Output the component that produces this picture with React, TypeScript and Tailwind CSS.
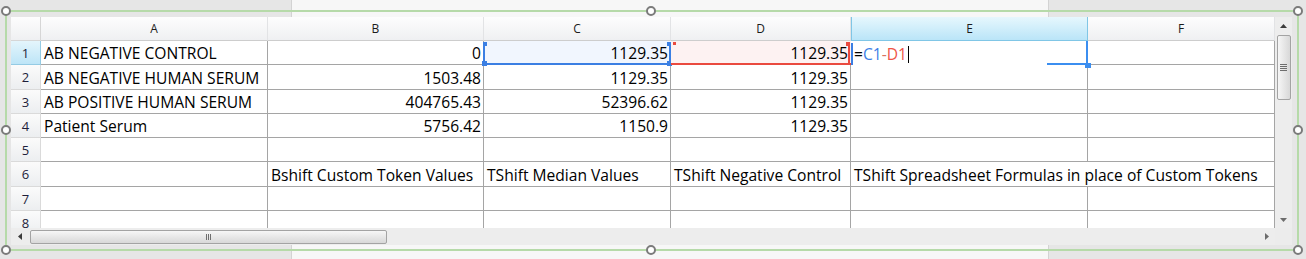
import React from 'react';

type Col = { key: string; w: string };

const cols: Col[] = [
  { key: 'A', w: 'w-[227px]' },
  { key: 'B', w: 'w-[216px]' },
  { key: 'C', w: 'w-[187px]' },
  { key: 'D', w: 'w-[180px]' },
  { key: 'E', w: 'w-[237px]' },
  { key: 'F', w: 'w-[187px]' },
];

const rows: { n: number; h: string; cells: string[] }[] = [
  { n: 2, h: 'h-[25px]', cells: ['AB NEGATIVE HUMAN SERUM', '1503.48', '1129.35', '1129.35', '', ''] },
  { n: 3, h: 'h-[24px]', cells: ['AB POSITIVE HUMAN SERUM', '404765.43', '52396.62', '1129.35', '', ''] },
  { n: 4, h: 'h-[24px]', cells: ['Patient Serum', '5756.42', '1150.9', '1129.35', '', ''] },
  { n: 5, h: 'h-[24px]', cells: ['', '', '', '', '', ''] },
  {
    n: 6,
    h: 'h-[25px]',
    cells: [
      '',
      'Bshift Custom Token Values',
      'TShift Median Values',
      'TShift Negative Control',
      'TShift Spreadsheet Formulas in place of Custom Tokens',
      '',
    ],
  },
  { n: 7, h: 'h-[24px]', cells: ['', '', '', '', '', ''] },
  { n: 8, h: 'h-[24px]', cells: ['', '', '', '', '', ''] },
];

const isNumber = (s: string) => /^[\d.]+$/.test(s);

function RowHeader({ n, active }: { n: number; active?: boolean }) {
  return (
    <div
      className={`flex w-[30px] shrink-0 items-center justify-center border-r border-b pt-[2px] text-[13px] text-[#1e1e3a] ${
        active
          ? 'border-[#94cbe4] bg-linear-to-b from-[#e4f5fc] to-[#bde5f7]'
          : 'border-[#dadada] bg-linear-to-b from-[#fbfbfb] to-[#eceef0]'
      }`}
    >
      {n}
    </div>
  );
}

function Cell({ w, text, wide }: { w: string; text: string; wide?: boolean }) {
  const right = isNumber(text);
  return (
    <div
      className={`flex shrink-0 items-center border-b border-[#a5a5a5] bg-white pt-[3px] ${w} ${
        right ? 'justify-end pr-[2px]' : 'pl-[3px]'
      } ${wide ? 'relative z-10 bg-transparent' : 'border-r'}`}
    >
      {text && <span className="whitespace-nowrap">{text}</span>}
    </div>
  );
}

// vertical selection edge with small square grips at both ends
function Edge({ pos, color }: { pos: string; color: string }) {
  return (
    <>
      <div className={`absolute top-[2px] bottom-0 w-[2px] ${pos} ${color}`} />
      <div className={`absolute top-[1px] h-[4px] w-[4px] ${pos} ${color}`} />
    </>
  );
}

function FirstRow() {
  return (
    <div className="flex h-[24px]">
      <RowHeader n={1} active />
      <Cell w="w-[227px]" text="AB NEGATIVE CONTROL" />
      <Cell w="w-[216px]" text="0" />

      <div className="relative flex w-[187px] shrink-0 items-center justify-end border-b-2 border-[#3b7fe3] bg-[#f1f6fe] pt-[3px] pr-[3px]">
        <span>1129.35</span>
        <Edge pos="-left-[1px]" color="bg-[#3b7fe3]" />
        <div className="absolute -bottom-[3px] -left-[2px] h-[5px] w-[5px] bg-[#3b7fe3]" />
        <Edge pos="right-0" color="bg-[#3b7fe3]" />
        <div className="absolute -right-[1px] -bottom-[3px] h-[5px] w-[5px] bg-[#3b7fe3]" />
      </div>

      <div className="relative flex w-[180px] shrink-0 items-center justify-end border-b-2 border-[#ea4a3f] bg-[#fdf2f2] pt-[3px] pr-[3px]">
        <span>1129.35</span>
        <div className="absolute top-[1px] left-[2px] h-[3px] w-[3px] bg-[#ea4a3f]" />
        <Edge pos="right-[1px]" color="bg-[#ea4a3f]" />
      </div>

      <div className="relative flex w-[237px] shrink-0 items-center bg-white pt-[3px] pl-[3px]">
        <span className="whitespace-nowrap">
          =<span className="text-[#3d7fe6]">C1</span>
          <span className="text-[#d9735f]">-</span>
          <span className="text-[#ee5547]">D1</span>
        </span>
        <span className="ml-[1px] h-[17px] w-[1px] bg-black" />
        <div className="absolute top-[2px] bottom-0 left-0 w-[2px] bg-[#3b7fe3]" />
        <div className="absolute top-0 right-0 bottom-0 w-[2px] bg-[#3b8ef0]" />
        <div className="absolute right-[2px] bottom-0 left-[196px] h-[2px] bg-[#3b8ef0]" />
        <div className="absolute -right-[3px] -bottom-[3px] h-[5px] w-[6px] bg-[#3b8ef0]" />
      </div>

      <Cell w="w-[187px]" text="" />
    </div>
  );
}

function Grid() {
  return (
    <div className="h-[211px] w-[1264px] overflow-hidden bg-white text-[15.6px] text-black">
      <div className="flex h-[24px] text-[12px] text-[#1b1b1b]">
        <div className="w-[30px] shrink-0 border-r border-b border-[#d6d6d6] bg-linear-to-b from-[#fdfdfd] to-[#eff0f2]" />
        {cols.map((c) =>
          c.key === 'E' ? (
            <div
              key={c.key}
              className={`flex shrink-0 items-center justify-center border-x border-b border-[#80c6e6] bg-linear-to-b from-[#e6f7fd] to-[#bae5f8] ${c.w}`}
            >
              {c.key}
            </div>
          ) : (
            <div
              key={c.key}
              className={`flex shrink-0 items-center justify-center border-r border-b border-r-[#e2e3e5] border-b-[#cdcdcd] bg-linear-to-b from-[#fdfdfd] to-[#eff0f2] ${c.w}`}
            >
              {c.key}
            </div>
          )
        )}
      </div>

      <FirstRow />

      {rows.map((r) => (
        <div key={r.n} className={`flex ${r.h}`}>
          <RowHeader n={r.n} />
          {cols.map((c, i) => (
            <Cell key={c.key} w={c.w} text={r.cells[i]} wide={r.n === 6 && c.key === 'E'} />
          ))}
        </div>
      ))}
    </div>
  );
}

function Arrow({ dir, color = '#3c3c3c' }: { dir: 'up' | 'down' | 'left' | 'right'; color?: string }) {
  const pts = {
    up: '0,4 7,4 3.5,0',
    down: '0,0 7,0 3.5,4',
    left: '4,0 4,7 0,3.5',
    right: '0,0 0,7 4,3.5',
  }[dir];
  const vertical = dir === 'up' || dir === 'down';
  return (
    <svg width={vertical ? 7 : 4} height={vertical ? 4 : 7} viewBox={vertical ? '0 0 7 4' : '0 0 4 7'}>
      <polygon points={pts} fill={color} />
    </svg>
  );
}

function VScroll() {
  return (
    <div className="flex h-[211px] w-[17px] flex-col items-center bg-[#ededed]">
      <div className="flex h-[17px] items-center justify-center">
        <Arrow dir="up" />
      </div>
      <div className="mt-[1px] flex h-[65px] w-[14px] flex-col items-center justify-center gap-[1px] rounded-[2px] border border-[#a3a3a3] bg-linear-to-r from-[#f6f6f6] to-[#d8d8d8]">
        <div className="h-[1px] w-[7px] bg-[#6e6e6e]" />
        <div className="h-[1px] w-[7px] bg-[#6e6e6e]" />
        <div className="h-[1px] w-[7px] bg-[#6e6e6e]" />
        <div className="h-[1px] w-[7px] bg-[#6e6e6e]" />
      </div>
      <div className="flex-1" />
      <div className="flex h-[17px] items-center justify-center">
        <Arrow dir="down" color="#6c6c6c" />
      </div>
    </div>
  );
}

function HScroll() {
  return (
    <div className="flex h-[17px] w-[1264px] items-center bg-[#ededed]">
      <div className="flex w-[17px] justify-center">
        <Arrow dir="left" />
      </div>
      <div className="ml-[2px] flex h-[14px] w-[357px] items-center justify-center gap-[1px] rounded-[2px] border border-[#a3a3a3] bg-linear-to-b from-[#f6f6f6] to-[#d8d8d8]">
        <div className="h-[6px] w-[1px] bg-[#6e6e6e]" />
        <div className="h-[6px] w-[1px] bg-[#6e6e6e]" />
        <div className="h-[6px] w-[1px] bg-[#6e6e6e]" />
      </div>
      <div className="flex-1" />
      <div className="flex w-[17px] justify-center">
        <Arrow dir="right" color="#6c6c6c" />
      </div>
    </div>
  );
}

function Handle({ pos }: { pos: string }) {
  return (
    <div
      className={`absolute h-[10px] w-[10px] -translate-x-1/2 -translate-y-1/2 rounded-full border-2 border-[#7b7b7b] bg-white ${pos}`}
    />
  );
}

export default function App() {
  return (
    <div className="relative h-[259px] w-[1306px] overflow-hidden font-['Open_Sans','Noto_Sans',sans-serif]">
      <div className="flex h-full">
        <div className="w-[292px] border-r border-[#d3d3d3] bg-[#e6e6e6]" />
        <div className="flex-1 bg-[#f7f7f7]" />
        <div className="w-[258px] border-l border-[#d3d3d3] bg-[#e6e6e6]" />
      </div>

      <div className="absolute top-[10px] left-[5px] h-[241px] w-[1294px] border-2 border-[#b6daa9] pt-[5px] pl-[4px]">
        <div className="flex">
          <Grid />
          <VScroll />
        </div>
        <div className="flex">
          <HScroll />
          <div className="h-[17px] w-[17px] bg-[#ececec]" />
        </div>
      </div>

      <Handle pos="top-[11px] left-[6px]" />
      <Handle pos="top-[11px] left-[651px]" />
      <Handle pos="top-[11px] left-[1298px]" />
      <Handle pos="top-[130px] left-[6px]" />
      <Handle pos="top-[130px] left-[1298px]" />
      <Handle pos="top-[250px] left-[6px]" />
      <Handle pos="top-[250px] left-[651px]" />
      <Handle pos="top-[250px] left-[1298px]" />
    </div>
  );
}
